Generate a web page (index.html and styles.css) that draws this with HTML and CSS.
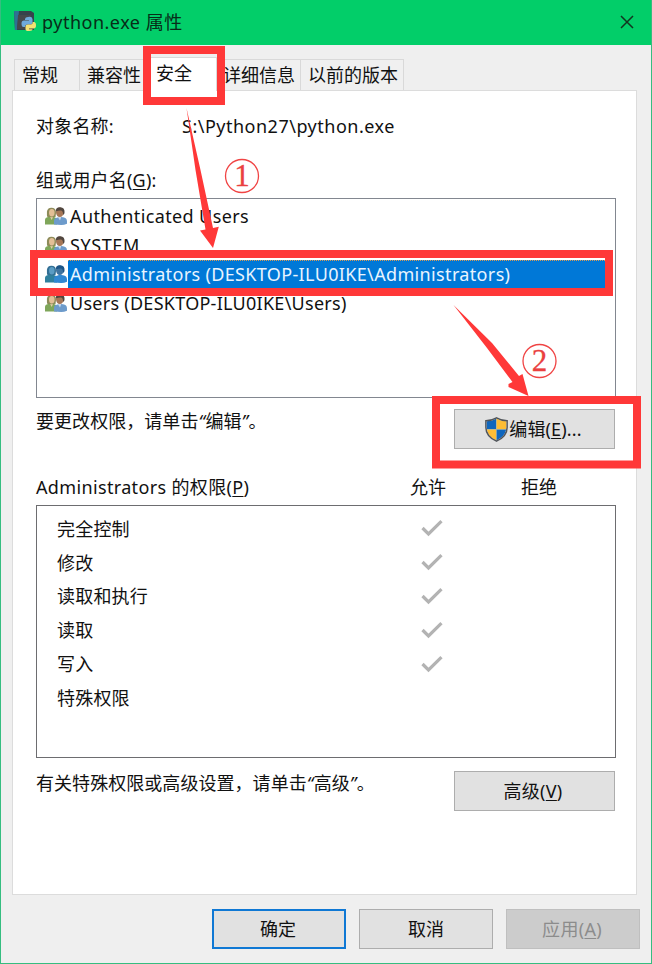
FILE: index.html
```html
<!DOCTYPE html>
<html lang="zh-CN">
<head>
<meta charset="utf-8">
<title>python.exe 属性</title>
<link rel="stylesheet" href="styles.css">
</head>
<body>
<svg class="defs" width="0" height="0" aria-hidden="true">
  <symbol id="users" viewBox="0 0 22 18">
    <path d="M0 17.500V13q0-2.500 3-3l2-.6 3 .2 4 2v6z" fill="#7fa65a"/>
    <path d="M4.500 9h4l-1.800 4z" fill="#e5cda8"/>
    <path d="M2 9Q.8 1 6 .8t5 5.200l-.5 4-3 .3-5-.3z" fill="#8d8b59"/>
    <ellipse cx="6.800" cy="5.800" rx="2.800" ry="3.700" fill="#e3bf96"/>
    <path d="M9 17.500v-3.800q0-2.700 3.500-3.200l2.200-.7 3.300.4q4 .6 4 4v2.500q-3 1.300-6 1.200z" fill="#6d9bcb"/>
    <path d="M12.500 9.500h4l-1.500 4z" fill="#c8d9eb"/>
    <ellipse cx="14.800" cy="5.300" rx="3.800" ry="4.800" fill="#a67757"/>
    <path d="M10.800 4.500Q10.500.3 15 .2q5.200-.1 4.500 6l-1.400 2q.2-4-2-4.700-2.600-.2-5.300 1z" fill="#51463f"/>
  </symbol>
  <symbol id="users-selected" viewBox="0 0 22 18">
    <path d="M0 17.500V13q0-2.500 3-3l2-.6 3 .2 4 2v6z" fill="#2f809e"/>
    <path d="M2 9Q.8 1 6 .8t5 5.200l-.5 4-3 .3-5-.3z" fill="#326f94"/>
    <ellipse cx="6.800" cy="5.800" rx="2.800" ry="3.700" fill="#5a9cc4"/>
    <path d="M9 17.500v-3.800q0-2.700 3.500-3.200l2.200-.7 3.300.4q4 .6 4 4v2.500q-3 1.300-6 1.200z" fill="#3087d2"/>
    <ellipse cx="14.800" cy="5.300" rx="3.800" ry="4.800" fill="#3f739f"/>
    <path d="M10.800 4.500Q10.500.3 15 .2q5.200-.1 4.500 6l-1.400 2q.2-4-2-4.700-2.600-.2-5.300 1z" fill="#1c5587"/>
  </symbol>
  <symbol id="check" viewBox="0 0 22 17">
    <path d="M1.500 8 7.500 14 20.500 1.200" fill="none" stroke="#b3b3b3" stroke-width="3.200"/>
  </symbol>
</svg>

<div class="window">
  <header class="titlebar">
    <svg class="app-icon" viewBox="0 0 22 21">
      <path d="M0 0h17l3 2v17H1z" fill="#36434c"/>
      <path d="M0 0h5L3 19H1z" fill="#2e7193"/>
      <path d="M4 4h13v14H3z" fill="#46484b"/>
      <path d="M14 6q4-1 4.500 2v3.500q-.3 2-2.500 2h-3q-2 .2-2 2.500h-1.500q-2 0-2-3.500 0-3 2.500-3H15V9h-4V8q.2-2 3-2z" fill="#6fa9dc"/>
      <path d="M15.500 20q-4 .5-4-2v-2.500q.2-2 2.200-2h3q2 0 2-2.500H20q2 .2 2 3.500 0 3-2.500 3H15v.8h3.500q0 1.600-3 1.700z" fill="#f4e173"/>
    </svg>
    <span class="title">python.exe 属性</span>
    <svg class="close" viewBox="0 0 14 14"><path d="M1 1 13 13M13 1 1 13" fill="none" stroke="#12351f" stroke-width="1.500"/></svg>
  </header>

  <nav class="tabs">
    <div class="tab tab-general">常规</div>
    <div class="tab tab-compat">兼容性</div>
    <div class="tab tab-security active">安全</div>
    <div class="tab tab-details">详细信息</div>
    <div class="tab tab-versions">以前的版本</div>
  </nav>

  <main class="panel">
    <div class="object"><span class="object-label">对象名称:</span><span class="object-path">S:\Python27\python.exe</span></div>
    <div class="groups-label">组或用户名(<u>G</u>):</div>
    <div class="list">
      <div class="user"><svg><use href="#users"/></svg><span class="n1">Authenticated Users</span></div>
      <div class="user"><svg><use href="#users"/></svg><span class="n2">SYSTEM</span></div>
      <div class="user selected"><svg><use href="#users-selected"/></svg><span class="n3">Administrators (DESKTOP-ILU0IKE\Administrators)</span></div>
      <div class="user"><svg><use href="#users"/></svg><span class="n4">Users (DESKTOP-ILU0IKE\Users)</span></div>
    </div>
    <div class="action edit-row">
      <span class="hint">要更改权限，请单击<i>“</i>编辑<i>”</i>。</span>
      <button class="button wide">
        <svg class="shield" viewBox="0 0 22 24">
          <path d="M11 .8Q15.500 3.500 21.200 3.500V10q0 8.500-10.200 13.200Q.8 18.500.8 10V3.500Q6.500 3.500 11 .8z" fill="#fff"/>
          <path d="M11 1.500V12H1.500V4Q7 4 11 1.500z" fill="#0f66bd"/>
          <path d="M11 1.500V12h9.500V4Q15 4 11 1.500z" fill="#fdbd35"/>
          <path d="M11 12v10.500Q2.800 18.500 1.700 12z" fill="#fdbd35"/>
          <path d="M11 12v10.500q8.200-4 9.300-10.500z" fill="#0f66bd"/>
          <path d="M11 .8Q15.500 3.500 21.200 3.500V10q0 8.500-10.200 13.200Q.8 18.500.8 10V3.500Q6.500 3.500 11 .8z" fill="none" stroke="#505459" stroke-width="1.400"/>
        </svg><span>编辑(<u>E</u>)...</span>
      </button>
    </div>
    <div class="perm-head"><span class="perm-title">Administrators 的权限(<u>P</u>)</span><span class="allow">允许</span><span class="deny">拒绝</span></div>
    <div class="permissions">
      <div class="perm"><span>完全控制</span><svg><use href="#check"/></svg></div>
      <div class="perm"><span>修改</span><svg><use href="#check"/></svg></div>
      <div class="perm"><span>读取和执行</span><svg><use href="#check"/></svg></div>
      <div class="perm"><span>读取</span><svg><use href="#check"/></svg></div>
      <div class="perm"><span>写入</span><svg><use href="#check"/></svg></div>
      <div class="perm"><span>特殊权限</span></div>
    </div>
    <div class="action advanced-row">
      <span class="hint">有关特殊权限或高级设置，请单击<i>“</i>高级<i>”</i>。</span>
      <button class="button wide">高级(<u>V</u>)</button>
    </div>
  </main>

  <footer class="footer">
    <button class="button default">确定</button>
    <button class="button">取消</button>
    <button class="button disabled" disabled>应用(<u>A</u>)</button>
  </footer>
</div>

<svg class="annotations" viewBox="0 0 652 964">
  <g fill="none" stroke="#ff3838" stroke-width="8">
    <path d="M147 50H221V101H147z"/>
    <path d="M34 254H609V292H34z"/>
    <path d="M436 400H637V464.500H436z"/>
  </g>
  <g fill="#ff3838">
    <path d="M186.500 108 200.500 170 213 228 218.800 226.800 213 248 200 230.500 205.500 229.500 195.500 170z"/>
    <path d="M453.500 305 492 343 519 376 522.500 374 528.500 396 508.500 387 508.500 384 512.500 382 487 348z"/>
  </g>
  <g class="steps">
    <circle cx="242" cy="176" r="16.500"/><text x="242" y="186">1</text>
    <circle cx="539.500" cy="361" r="16.500"/><text x="539.500" y="371">2</text>
  </g>
</svg>
</body>
</html>
```
FILE: styles.css
```css
* { box-sizing: border-box; }
body { margin: 0; color: #111; font: 18px/24px "Noto Sans", "Noto Sans CJK SC", sans-serif; }
u { text-underline-offset: 2px; text-decoration-thickness: 1px; }
i { font-style: italic; display: inline-block; width: 7px; }
.defs { position: absolute; }
.window { width: 652px; height: 964px; background: #efefef; border: 1px solid #35bd80; border-top: 0; display: flex; flex-direction: column; overflow: hidden; }
.titlebar { height: 45px; margin: 0 -1px; flex: none; background: #02ce69; display: flex; align-items: center; padding: 0 18px 2px 14px; color: #082c18; }
.app-icon { width: 22px; height: 21px; margin-right: 6px; }
.title { flex: 1; letter-spacing: .5px; }
.close { width: 14px; height: 14px; }

.tabs { height: 45px; flex: none; padding-left: 13px; display: flex; align-items: flex-end; }
.tab { height: 31px; border: 1px solid #d9d9d9; border-left-width: 0; border-bottom: 0; background: #f0f0f0; line-height: 30px; white-space: nowrap; padding-left: 7px; }
.tab-general { width: 66px; border-left-width: 1px; }
.tab-compat { width: 71px; }
.tab-security { width: 66px; padding-left: 5px; }
.tab-details { width: 84px; padding-left: 6px; }
.tab-versions { width: 103px; padding-left: 7px; }
.tab.active { height: 34px; background: #fff; margin-bottom: -1px; z-index: 1; }

.panel { width: 625px; height: 805px; flex: none; margin-left: 11px; border: 1px solid #dcdcdc; background: #fff; padding: 23px 20px 0 23px; }
.object { display: flex; height: 54px; }
.object-label { width: 146px; letter-spacing: .2px; }
.object-path { letter-spacing: .5px; }
.groups-label { height: 30px; letter-spacing: .2px; }
.list { height: 200px; border: 1px solid #828790; padding: 3px 10px 0 8px; }
.user { height: 29px; display: flex; align-items: center; white-space: nowrap; }
.user svg { width: 22px; height: 18px; margin: -2px 1px 0 0; flex: none; }
.user span { flex: 1; height: 29px; line-height: 28px; padding-left: 2px; }
.n1 { letter-spacing: .38px; }
.n2 { letter-spacing: .6px; }
.n3 { letter-spacing: .35px; }
.n4 { letter-spacing: .27px; }
.user.selected span { background: #0078d7; color: #e8f4ff; border-top: 1px dotted #d99b54; line-height: 26px; }
.action { display: flex; justify-content: space-between; padding-right: 1px; }
.edit-row { height: 77px; padding-top: 11px; }
.hint { letter-spacing: .05px; }
.button { width: 134px; height: 40px; padding: 0; border: 1px solid #adadad; background: #e1e1e1; color: #111; font: inherit; display: flex; align-items: center; justify-content: center; }
.wide { width: 161px; letter-spacing: .15px; }
.wide:not(:has(svg)) { padding-right: 3px; letter-spacing: .3px; }
.shield { width: 23px; height: 25px; margin: 0 1px 0 -2px; }
.perm-head { display: flex; height: 30px; white-space: nowrap; }
.perm-title { width: 374px; letter-spacing: .35px; }
.allow { width: 111px; }
.permissions { height: 253px; border: 1px solid #6d6d70; padding: 6px 19px 0 20px; }
.perm { height: 33.800px; display: flex; align-items: center; }
.perm span { width: 364px; letter-spacing: .2px; }
.perm svg { width: 22px; height: 17px; }
.advanced-row { padding-top: 13px; }
.footer { flex: 1; display: flex; gap: 13px; justify-content: flex-end; padding: 14px 11px 0 0; }
.default { border: 2px solid #0f78d4; padding-right: 2px; }
.disabled { color: #8c8c8c; background: #ccc; border-color: #bfbfbf; padding-right: 2px; letter-spacing: .3px; }

.annotations { position: absolute; left: 0; top: 0; width: 652px; height: 964px; pointer-events: none; }
.steps circle { fill: none; stroke: #f04444; stroke-width: 1.300; }
.steps text { fill: #ea4040; stroke: #ea4040; stroke-width: .3px; font: 31px "Liberation Serif", serif; text-anchor: middle; }
```
